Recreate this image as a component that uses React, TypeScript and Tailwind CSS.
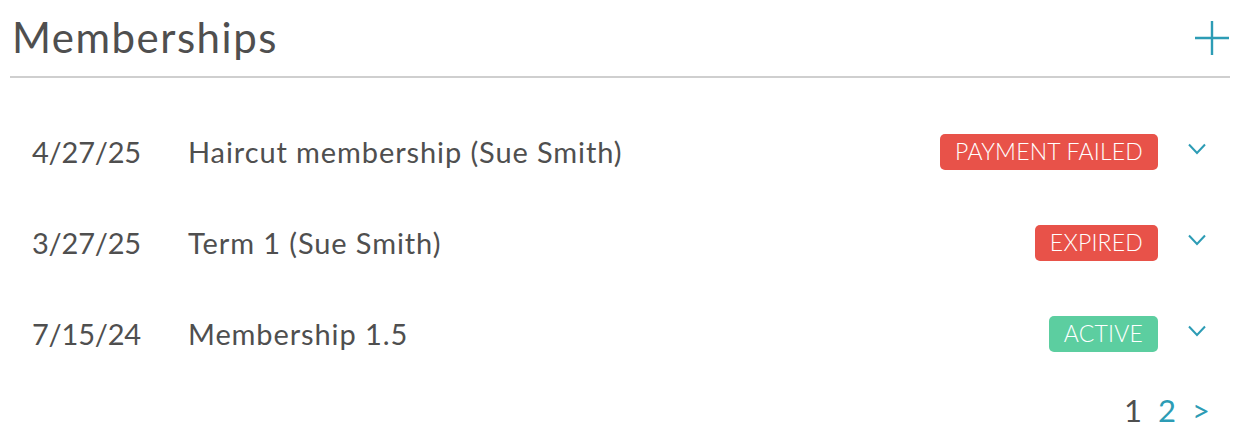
type Membership = {
  date: string;
  name: string;
  status: "PAYMENT FAILED" | "EXPIRED" | "ACTIVE";
};

const memberships: Membership[] = [
  { date: "4/27/25", name: "Haircut membership (Sue Smith)", status: "PAYMENT FAILED" },
  { date: "3/27/25", name: "Term 1 (Sue Smith)", status: "EXPIRED" },
  { date: "7/15/24", name: "Membership 1.5", status: "ACTIVE" },
];

const StatusBadge = ({ status }: { status: Membership["status"] }) => {
  const color = status === "ACTIVE" ? "bg-[#5ccea0]" : "bg-[#e85249]";
  return (
    <span
      className={`${color} rounded-[5px] px-[15px] h-[36px] flex items-center text-[23px] font-light tracking-[0.2px] text-white leading-none`}
    >
      {status}
    </span>
  );
};

export default function App() {
  return (
    <div className="w-[1254px] h-[434px] bg-white pl-[10px] pr-[24px] font-['Lato',sans-serif] text-[#4f4f4f]">
      {/* header */}
      <div className="flex items-end justify-between h-[78px] border-b-2 border-[#cfcfcf] pb-[18px]">
        <h1 className="pl-[2px] text-[42px] leading-none tracking-[1.5px]">Memberships</h1>
        <svg width="36" height="36" viewBox="0 0 36 36" className="mb-[2px]">
          <path d="M18 1v34M1 18h34" stroke="#2d9cb5" strokeWidth="2.4" />
        </svg>
      </div>

      {/* rows */}
      <div className="mt-[28px] flex flex-col">
        {memberships.map((m) => (
          <div key={m.date} className="flex items-center h-[91px] pl-[22px] text-[29px]">
            <div className="w-[156px] tracking-[-0.2px]">{m.date}</div>
            <div className="flex-1 tracking-[0.9px]">{m.name}</div>
            <StatusBadge status={m.status} />
            <div className="w-[72px] flex justify-end pr-[24px] pb-[5px]">
              <svg width="18" height="12" viewBox="0 0 18 12">
                <path d="M1 1.5l8 8.5 8-8.5" fill="none" stroke="#2d9cb5" strokeWidth="2" />
              </svg>
            </div>
          </div>
        ))}
      </div>

      {/* pagination */}
      <div className="mt-[8px] flex justify-end items-center gap-[16px] pr-[20px] text-[31px]">
        <span>1</span>
        <span className="text-[#2d9cb5]">2</span>
        <span className="text-[#2d9cb5]">&gt;</span>
      </div>
    </div>
  );
}
